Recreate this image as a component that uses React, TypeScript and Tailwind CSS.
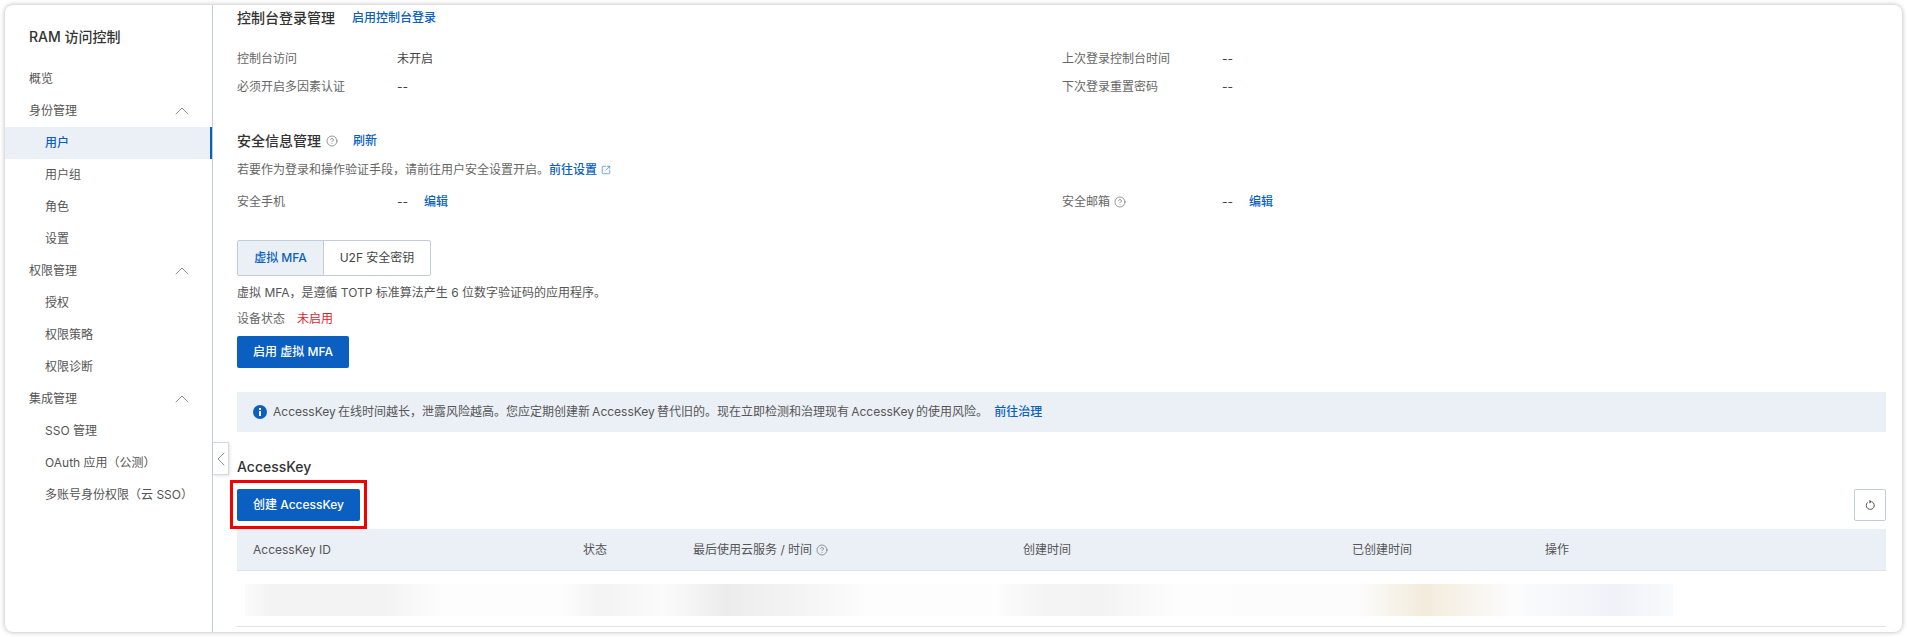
import { ChevronUp, ChevronLeft, CircleHelp, SquareArrowOutUpRight } from "lucide-react";

function NavGroup({ label }: { label: string }) {
  return (
    <div className="h-8 pl-6 pr-[18px] flex items-center justify-between">
      <span>{label}</span>
      <ChevronUp size={24} strokeWidth={1} className="text-[#8a8f99]" />
    </div>
  );
}

function NavItem({ label, active }: { label: string; active?: boolean }) {
  return (
    <div
      className={
        active
          ? "h-8 pl-10 flex items-center bg-[#ebf0f7] text-[#0a5fc0] font-medium border-r-2 border-[#0a5fc0]"
          : "h-8 pl-10 flex items-center"
      }
    >
      {label}
    </div>
  );
}

function Sidebar() {
  return (
    <div className="w-[207px] shrink-0 text-xs text-[#555] pt-[20px]">
      <div className="h-6 pl-6 flex items-center text-sm font-medium text-[#333]">RAM 访问控制</div>
      <div className="mt-[14px]">
        <div className="h-8 pl-6 flex items-center">概览</div>
        <NavGroup label="身份管理" />
        <NavItem label="用户" active />
        <NavItem label="用户组" />
        <NavItem label="角色" />
        <NavItem label="设置" />
        <NavGroup label="权限管理" />
        <NavItem label="授权" />
        <NavItem label="权限策略" />
        <NavItem label="权限诊断" />
        <NavGroup label="集成管理" />
        <NavItem label="SSO 管理" />
        <NavItem label="OAuth 应用（公测）" />
        <NavItem label="多账号身份权限（云 SSO）" />
      </div>
    </div>
  );
}

function Field({ label, value, help, edit }: { label: string; value: string; help?: boolean; edit?: boolean }) {
  return (
    <div className="flex items-center h-7">
      <div className="w-[160px] flex items-center text-[#666]">
        {label}
        {help && <CircleHelp size={12} strokeWidth={1.2} className="ml-[4px] text-[#555]" />}
      </div>
      <span className="text-[#444]">{value}</span>
      {edit && <span className="ml-4 text-[#0a5fc0] font-medium">编辑</span>}
    </div>
  );
}

function Row({ children }: { children: React.ReactNode }) {
  return <div className="grid grid-cols-[825px_1fr]">{children}</div>;
}

function InfoIcon() {
  return (
    <svg width="14" height="14" viewBox="0 0 14 14" className="shrink-0">
      <circle cx="7" cy="7" r="7" fill="#0a5fc0" />
      <rect x="6" y="6" width="2" height="5" fill="#fff" />
      <rect x="6" y="3" width="2" height="2" fill="#fff" />
    </svg>
  );
}

function RefreshIcon() {
  return (
    <svg width="12" height="14" viewBox="0 0 12 14" fill="none" stroke="#555" strokeWidth="1">
      <path d="M3.6 4.4a4 4 0 1 0 4.4-.6" />
      <path d="M5.4 1.8l2.6 2-2.6 1.6z" fill="#555" stroke="none" />
    </svg>
  );
}

function Main() {
  return (
    <div className="flex-1 min-w-0 border-l border-[#c3ccd9] pl-6 pr-[16px] pt-[1px] text-xs relative">
      <div className="h-6 flex items-center">
        <span className="text-sm font-medium text-[#333]">控制台登录管理</span>
        <span className="ml-[17px] text-[#0a5fc0] font-medium">启用控制台登录</span>
      </div>
      <div className="mt-[15px]">
        <Row>
          <Field label="控制台访问" value="未开启" />
          <Field label="上次登录控制台时间" value="--" />
        </Row>
        <Row>
          <Field label="必须开启多因素认证" value="--" />
          <Field label="下次登录重置密码" value="--" />
        </Row>
      </div>

      <div className="mt-[28px] h-6 flex items-center">
        <span className="text-sm font-medium text-[#333]">安全信息管理</span>
        <CircleHelp size={12} strokeWidth={1.2} className="ml-[5px] text-[#555]" />
        <span className="ml-[15px] text-[#0a5fc0] font-medium">刷新</span>
      </div>
      <div className="mt-[7px] h-5 flex items-center text-[#666]">
        若要作为登录和操作验证手段，请前往用户安全设置开启。
        <span className="text-[#0a5fc0] font-medium">前往设置</span>
        <SquareArrowOutUpRight size={10} strokeWidth={1.3} className="ml-[4px] text-[#0a5fc0]" />
      </div>
      <div className="mt-2">
        <Row>
          <Field label="安全手机" value="--" edit />
          <Field label="安全邮箱" value="--" help edit />
        </Row>
      </div>

      <div className="mt-[24px] flex w-[194px] h-9 border border-[#c3ccd9] rounded-[2px] overflow-hidden">
        <div className="w-[86px] flex items-center justify-center bg-[#ebf0f7] text-[#0a5fc0] font-medium border-r border-[#c3ccd9]">虚拟 MFA</div>
        <div className="flex-1 flex items-center justify-center text-[#444]">U2F 安全密钥</div>
      </div>
      <div className="mt-[7px] h-5 flex items-center text-[#555]">虚拟 MFA，是遵循 TOTP 标准算法产生 6 位数字验证码的应用程序。</div>
      <div className="mt-[6px] h-5 flex items-center text-[#666]">
        设备状态<span className="ml-[12px] text-[#d9262f]">未启用</span>
      </div>
      <button className="mt-[7px] block w-[112px] h-8 rounded-[2px] bg-[#0a5fc0] text-white font-medium">启用 虚拟 MFA</button>

      <div className="mt-6 h-10 px-4 flex items-center gap-[6px] bg-[#ebf0f7] text-[#555]">
        <InfoIcon />
        <span className="[word-spacing:-1.2px]">
          AccessKey 在线时间越长，泄露风险越高。您应定期创建新 AccessKey 替代旧的。现在立即检测和治理现有 AccessKey 的使用风险。
          <span className="ml-[6px] text-[#0a5fc0] font-medium">前往治理</span>
        </span>
      </div>

      <div className="mt-[23px] h-6 flex items-center text-sm font-medium text-[#333]">AccessKey</div>
      <div className="mt-[10px] flex justify-between">
        <div className="relative">
          <button className="block w-[123px] h-8 rounded-[2px] bg-[#0a5fc0] text-white font-medium">创建 AccessKey</button>
          <div className="absolute -left-[7px] -top-[9px] w-[137px] h-[49px] border-[3px] border-[#f40000]" />
        </div>
        <div className="w-8 h-8 border border-[#c3ccd9] rounded-[2px] flex items-center justify-center">
          <RefreshIcon />
        </div>
      </div>

      <div className="mt-2 h-[42px] grid grid-cols-[330px_110px_330px_329px_193px_1fr] pl-4 items-center bg-[#ebf0f7] border-b border-[#dfe3e9] text-[#555]">
        <div>AccessKey ID</div>
        <div>状态</div>
        <div className="flex items-center">
          最后使用云服务 / 时间
          <CircleHelp size={12} strokeWidth={1.2} className="ml-[4px] text-[#555]" />
        </div>
        <div>创建时间</div>
        <div>已创建时间</div>
        <div>操作</div>
      </div>
      <div className="h-[56px] border-b border-[#dfe3e9] pt-[13px]">
        <div className="ml-2 w-[1428px] h-8 bg-[linear-gradient(90deg,#fbfbfb_0px,#f3f3f3_25px,#f3f3f3_138px,#fdfdfd_199px,#fdfdfd_315px,#f3f3f3_357px,#fbfbfb_419px,#ececec_480px,#f6f6f6_572px,#fdfdfd_623px,#fdfdfd_750px,#f4f4f4_800px,#f3f3f3_855px,#fdfdfd_932px,#fcfcfc_1113px,#f3ebdc_1180px,#fcfcfd_1267px,#eff2f8_1370px,#f8fafc_1428px)]" />
      </div>

      <div className="absolute left-0 top-[437px] w-[16px] h-[33px] bg-white border border-l-0 border-[#d5dae2] flex items-center justify-center shadow-[1px_1px_3px_rgba(0,0,0,0.12)]">
        <ChevronLeft size={24} strokeWidth={1} className="shrink-0 text-[#8a8f99]" />
      </div>
    </div>
  );
}

export default function App() {
  return (
    <div className="h-[637px] p-[5px] bg-white font-['Inter','Noto_Sans_CJK_SC',sans-serif] overflow-hidden">
      <div className="h-[627px] flex bg-white rounded-[8px] overflow-hidden shadow-[0_0_5px_rgba(0,0,0,0.3)]">
        <Sidebar />
        <Main />
      </div>
    </div>
  );
}
